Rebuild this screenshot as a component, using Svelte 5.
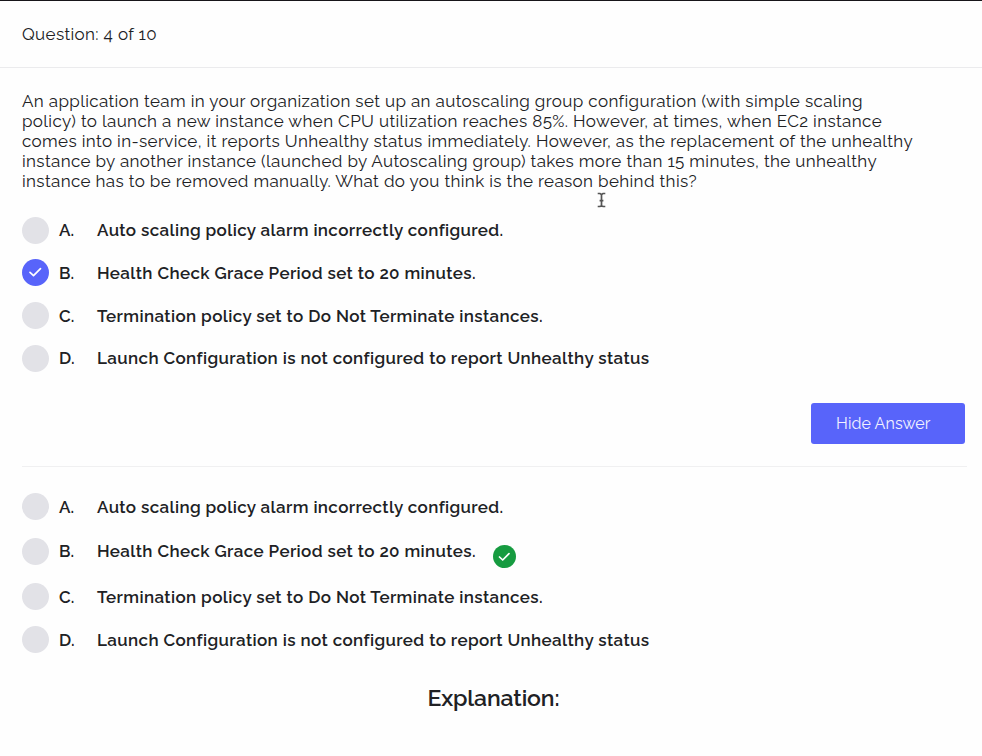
<script>
  const questionLines = [
    { text: 'An application team in your organization set up an autoscaling group configuration (with simple scaling', width: 841 },
    { text: 'policy) to launch a new instance when CPU utilization reaches 85%. However, at times, when EC2 instance', width: 860 },
    { text: 'comes into in-service, it reports Unhealthy status immediately. However, as the replacement of the unhealthy', width: 891 },
    { text: 'instance by another instance (launched by Autoscaling group) takes more than 15 minutes, the unhealthy', width: 855 },
    { text: 'instance has to be removed manually. What do you think is the reason behind this?', width: 675 }
  ];

  const options = [
    { letter: 'A.', text: 'Auto scaling policy alarm incorrectly configured.', width: 406.5 },
    { letter: 'B.', text: 'Health Check Grace Period set to 20 minutes.', width: 379 },
    { letter: 'C.', text: 'Termination policy set to Do Not Terminate instances.', width: 446 },
    { letter: 'D.', text: 'Launch Configuration is not configured to report Unhealthy status', width: 552.5 }
  ];

  const selected = 'B.';
  const correct = 'B.';

  // Tracks a line of text out to the given measure.
  function fit(node, width) {
    const natural = node.getBoundingClientRect().width;
    node.style.letterSpacing = `${(width - natural) / node.textContent.length}px`;
  }
</script>

<main>
  <header><span use:fit={135}>Question: 4 of 10</span></header>

  <section class="question">
    <p>
      {#each questionLines as line}
        <span class="line"><span use:fit={line.width}>{line.text}</span></span>
      {/each}
    </p>
    <svg class="cursor" width="9" height="16" viewBox="0 0 9 16" fill="none" stroke="#555" stroke-width="1.7">
      <path d="M.7 1.5h2.3l1.5 1 1.5-1h2.3M.7 14.5h2.3l1.5-1 1.5 1h2.3M4.5 2v12M2.6 8.7h3.8" />
    </svg>
  </section>

  <ul class="options">
    {#each options as option}
      <li>
        <span class="radio" class:checked={option.letter === selected}>
          {#if option.letter === selected}
            <svg width="27" height="27" viewBox="0 0 27 27"><path d="M8 13.3l3.5 3.3 7-7" /></svg>
          {/if}
        </span>
        <span class="letter">{option.letter}</span>
        <span class="label" use:fit={option.width}>{option.text}</span>
      </li>
    {/each}
  </ul>

  <div class="actions">
    <button><span use:fit={94.5}>Hide Answer</span></button>
  </div>

  <ul class="options answers">
    {#each options as option}
      <li>
        <span class="radio"></span>
        <span class="letter">{option.letter}</span>
        <span class="label" use:fit={option.width}>{option.text}</span>
        {#if option.letter === correct}
          <span class="correct">
            <svg width="23" height="23" viewBox="0 0 23 23"><path d="M6.5 12l3.2 3 6.3-6.4" /></svg>
          </span>
        {/if}
      </li>
    {/each}
  </ul>

  <h2><span use:fit={132}>Explanation:</span></h2>
</main>

<style>
  :global(body) {
    background: #fefefe;
    overflow: hidden;
  }
  main {
    box-sizing: border-box;
    height: 756px;
    border-top: 1px solid #17151a;
    background: #fefefe;
    color: #202124;
    font-family: Raleway, Lato, 'Open Sans', sans-serif;
    font-size: 17px;
    font-variant-numeric: oldstyle-nums;
    font-variant-ligatures: none;
  }
  span {
    white-space: nowrap;
  }
  header {
    box-sizing: border-box;
    height: 67px;
    padding: 22px 22px 0;
    line-height: 22px;
    border-bottom: 1px solid #ebebed;
  }
  .question {
    position: relative;
    padding: 23px 22px 0;
  }
  p {
    margin: 0;
  }
  .line {
    display: block;
    height: 20px;
    line-height: 20px;
  }
  .cursor {
    position: absolute;
    left: 597px;
    top: 124px;
  }
  ul {
    list-style: none;
    margin: 0;
    padding: 17.7px 22px 0;
  }
  li {
    display: flex;
    align-items: center;
    height: 42.8px;
  }
  .radio {
    flex: none;
    width: 27px;
    height: 27px;
    border-radius: 50%;
    background: #e2e2e7;
  }
  .checked {
    background: #5864fa;
  }
  svg {
    display: block;
  }
  .radio path,
  .correct path {
    fill: none;
    stroke: #fff;
    stroke-width: 1.7;
    stroke-linecap: round;
    stroke-linejoin: round;
  }
  .letter {
    width: 38px;
    margin-left: 10px;
    font-weight: 600;
  }
  .label {
    font-weight: 600;
  }
  .actions {
    display: flex;
    justify-content: flex-end;
    margin: 23.3px 15px 0 22px;
    padding: 0 2px 22px 0;
    border-bottom: 1px solid #f0f0f1;
  }
  button {
    width: 154px;
    height: 41px;
    padding: 0 0 0 25px;
    border: 0;
    border-radius: 3px;
    background: #5864fa;
    color: #f2f2ff;
    font: inherit;
    font-size: 16px;
    line-height: 20px;
    text-align: left;
  }
  .answers {
    padding-top: 18px;
  }
  .answers li:nth-child(2) {
    height: 47px;
  }
  .answers li:nth-child(3) {
    height: 43.6px;
  }
  .correct {
    width: 23px;
    height: 23px;
    margin: 10px 0 0 17px;
    border-radius: 50%;
    background: #169b40;
  }
  h2 {
    margin: 21.4px 0 0;
    padding-left: 427.4px;
    font-size: 23px;
    line-height: 30px;
    font-weight: 600;
  }
</style>
